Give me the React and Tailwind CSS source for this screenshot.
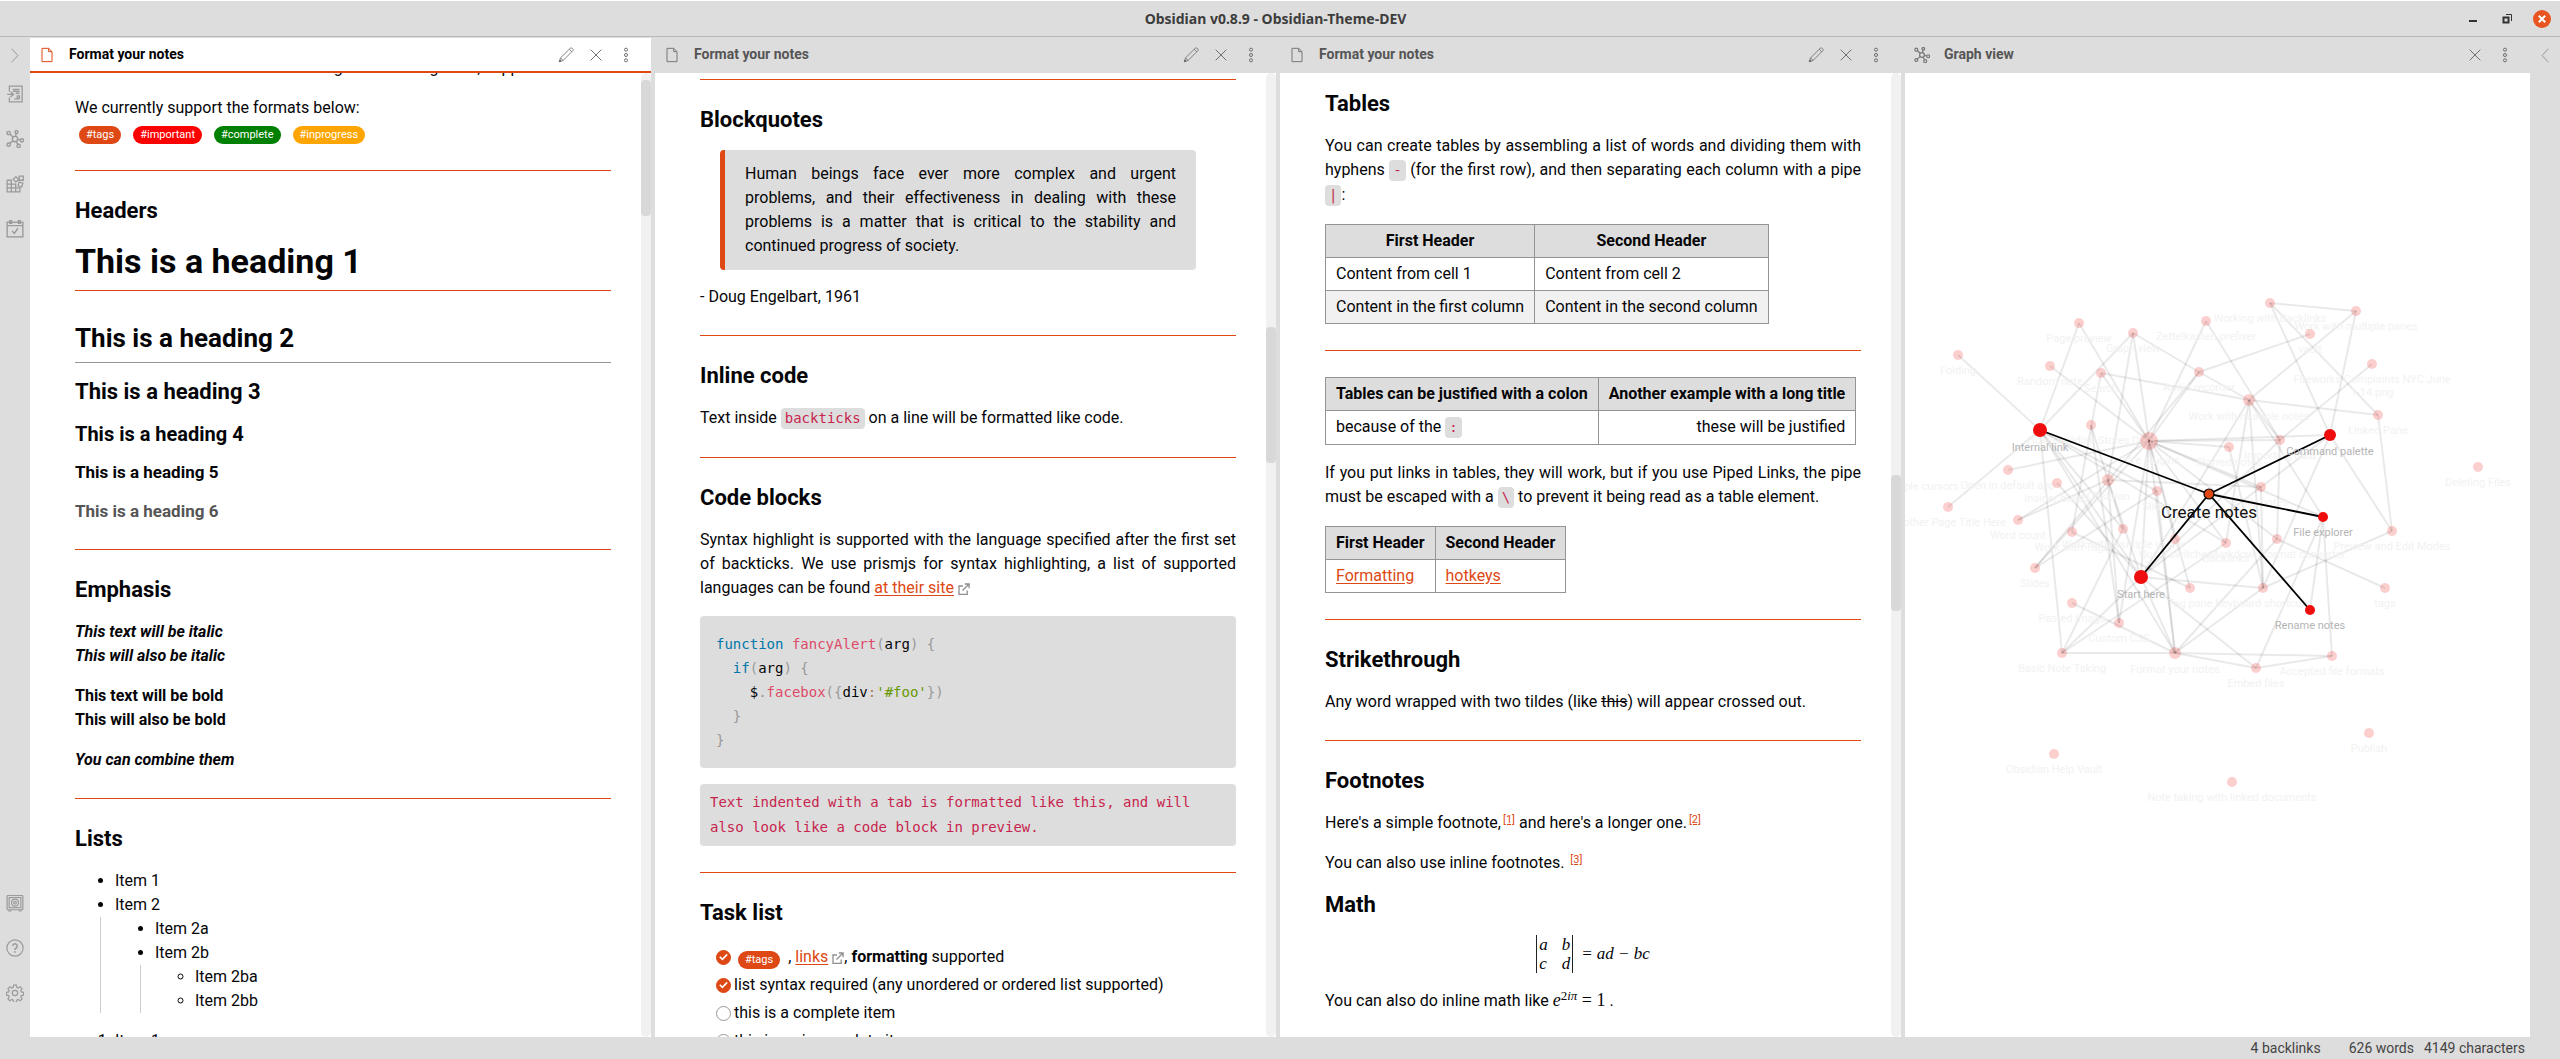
import React from "react";

/* ---------- icons ---------- */

function Icon({ size = 18, stroke = 1.5, className = "", children }) {
  return (
    <svg
      width={size}
      height={size}
      viewBox="0 0 24 24"
      fill="none"
      stroke="currentColor"
      strokeWidth={stroke}
      className={className}
      aria-hidden="true"
    >
      {children}
    </svg>
  );
}

const FileIcon = () => (
  <Icon size={16} stroke={1.5}>
    <path d="M4.500 2h10l5 5v15h-15z" />
    <path d="M14.500 2v5h5" />
  </Icon>
);

const PencilIcon = () => (
  <Icon size={16} stroke={1.2}>
    <path d="M2 22l1.800-5.600L18.600 1.600a1.600 1.600 0 0 1 2.200 0l1.600 1.600a1.600 1.600 0 0 1 0 2.200L7.600 20.200z" />
    <path d="M17 3.500L20.500 7M3.800 16.400l3.800 3.800" />
    <path d="M2 22l.8-2.600 1.800 1.800z" fill="currentColor" />
  </Icon>
);

const CloseIcon = () => (
  <Icon size={16} stroke={1.4}>
    <path d="M4 4l16 16M20 4L4 20" />
  </Icon>
);

const MoreIcon = () => (
  <Icon size={16} stroke={1.4}>
    <circle cx="12" cy="4" r="2.300" />
    <circle cx="12" cy="12" r="2.300" />
    <circle cx="12" cy="20" r="2.300" />
  </Icon>
);

const GraphIcon = ({ size = 18 }) => (
  <Icon size={size} stroke={1.8}>
    <circle cx="12" cy="12" r="3.600" />
    <circle cx="3.500" cy="4" r="2.200" />
    <circle cx="14" cy="2.800" r="2" />
    <circle cx="3.500" cy="19.500" r="2.200" />
    <circle cx="21.200" cy="13.800" r="2.200" />
    <circle cx="16.800" cy="21.200" r="2.200" />
    <path d="M5.200 5.600L9.400 9.400M13.500 4.800l-.7 3.600M5 17.800l4.400-3.400M15.600 12.600l3.400.7M13.600 15.400l2.200 3.800" />
  </Icon>
);

const SwitcherIcon = () => (
  <Icon stroke={1.7}>
    <path d="M4.500 8.500V1.500h17v21h-17v-6" />
    <path d="M9 6h9M9 8.500h9M13 11h5M15 14.500h3v3h-3z" />
    <path d="M1.500 12.500h7M6 9l4 3.500L6 16M11 18.500h7" />
  </Icon>
);

const BlocksIcon = () => (
  <Icon stroke={1.7}>
    <path d="M1.500 7v15.500h17v-5.200h-17M1.500 12.200h11.400v10.300M1.500 7h5.600v15.500" />
    <path d="M17.500 1.500h5.500v5.500h-5.500zM13.200 2.200l3.600 3.600-3.600 3.600-3.600-3.600zM17.500 9.500l5 1.500-1.500 5-5-1.500z" />
  </Icon>
);

const CalendarIcon = () => (
  <Icon stroke={1.8}>
    <rect x="1.500" y="3" width="21" height="19.500" />
    <path d="M1.500 7.500h21M5 .8h2.500v3.600H5zM16.500.8H19v3.600h-2.500zM8 14.500l3 3.500 5-7" />
  </Icon>
);

const VaultIcon = () => (
  <Icon stroke={1.6}>
    <rect x="1.500" y="2" width="21" height="19" rx="1" />
    <rect x="4.200" y="4.700" width="15.600" height="13.600" />
    <circle cx="12" cy="11.500" r="4.600" />
    <circle cx="12" cy="11.500" r="1.800" />
    <path d="M3 22.500h4M17 22.500h4" />
  </Icon>
);

const HelpIcon = () => (
  <Icon stroke={1.5}>
    <circle cx="12" cy="12" r="10.800" />
    <path d="M9 9.400a3 3 0 1 1 4.600 2.600c-1 .6-1.600 1.200-1.600 2.500" strokeWidth="2" />
    <path d="M12 16.400v1.900" strokeWidth="2.200" />
  </Icon>
);

const GearIcon = () => (
  <Icon stroke={1.6}>
    <circle cx="12" cy="12" r="3.600" />
    <path d="M10.200 1.500h3.600l.6 3 1.900.8 2.600-1.700 2.500 2.500-1.700 2.600.8 1.900 3 .6v3.600l-3 .6-.8 1.900 1.700 2.600-2.500 2.500-2.600-1.700-1.900.8-.6 3h-3.600l-.6-3-1.900-.8-2.600 1.700-2.500-2.500 1.700-2.600-.8-1.900-3-.6v-3.600l3-.6.8-1.900-1.700-2.600 2.500-2.500 2.600 1.700 1.900-.8z" />
  </Icon>
);

const ExternalIcon = () => (
  <svg
    width="12"
    height="12"
    viewBox="0 0 12 12"
    fill="none"
    stroke="#8f8f8f"
    strokeWidth="1.300"
    className="ml-1 inline-block align-[-2px]"
    aria-hidden="true"
  >
    <path d="M5 3H1v8.300h8.200V7.500M6.800 1h4.300v4.300M11 1L4.500 7.500" />
  </svg>
);

/* ---------- window chrome ---------- */

function TitleBar() {
  return (
    <header className="flex h-[37px] shrink-0 items-center border-t border-b border-t-white border-b-[#b8b8b8] pr-[9px]">
      <div className="flex-1" />
      <h1 className="font-['Noto_Sans',sans-serif] text-[14px] font-bold text-[#3d3d3d]">
        Obsidian v0.8.9 - Obsidian-Theme-DEV
      </h1>
      <div className="flex flex-1 items-center justify-end gap-[18px] text-[#333]">
        <button aria-label="Minimize" className="flex size-4 items-center justify-center">
          <span className="mt-1 h-0.5 w-2 bg-current" />
        </button>
        <button aria-label="Restore" className="flex size-4 items-center justify-center">
          <svg width="12" height="12" viewBox="0 0 12 12" fill="none" stroke="currentColor" aria-hidden="true">
            <path d="M2.500 4.500h5v5h-5z" strokeWidth="2" />
            <path d="M5 1.500h5.500V8" strokeWidth="1" />
          </svg>
        </button>
        <button aria-label="Close window" className="flex size-[18px] items-center justify-center rounded-full bg-[#e95420] text-white">
          <svg width="8" height="8" viewBox="0 0 8 8" stroke="currentColor" strokeWidth="2" aria-hidden="true">
            <path d="M.8.8l6.400 6.400M7.200.8L.8 7.200" />
          </svg>
        </button>
      </div>
    </header>
  );
}

function RibbonButton({ label, children }) {
  return (
    <button aria-label={label} className="flex h-[45px] w-full items-center justify-center">
      {children}
    </button>
  );
}

function LeftRibbon() {
  return (
    <nav className="flex w-[30px] shrink-0 flex-col pb-[22px] text-[#9a9a9a]">
      <button aria-label="Expand sidebar" className="flex h-[34px] items-center justify-center">
        <svg width="8" height="15" viewBox="0 0 8 15" fill="none" stroke="currentColor" className="mt-0.5" aria-hidden="true">
          <path d="M.8.8l6 6.700-6 6.700" />
        </svg>
      </button>
      <RibbonButton label="Open quick switcher"><SwitcherIcon /></RibbonButton>
      <RibbonButton label="Open graph view"><GraphIcon /></RibbonButton>
      <RibbonButton label="Open Markdown importer"><BlocksIcon /></RibbonButton>
      <RibbonButton label="Open today's note"><CalendarIcon /></RibbonButton>
      <div className="flex-1" />
      <RibbonButton label="Open another vault"><VaultIcon /></RibbonButton>
      <RibbonButton label="Help"><HelpIcon /></RibbonButton>
      <RibbonButton label="Settings"><GearIcon /></RibbonButton>
    </nav>
  );
}

function RightRibbon() {
  return (
    <nav className="w-[30px] shrink-0 text-[#9a9a9a]">
      <button aria-label="Expand right sidebar" className="flex h-9 w-full items-center justify-center">
        <svg width="8" height="15" viewBox="0 0 8 15" fill="none" stroke="currentColor" aria-hidden="true">
          <path d="M7.200.8l-6 6.700 6 6.700" />
        </svg>
      </button>
    </nav>
  );
}

function PaneHeader({ title, icon, active, editable = true }) {
  return (
    <div
      className={
        active
          ? "mt-px flex h-[35px] shrink-0 items-center border-b-2 border-[#dd4814] bg-white pr-[17px] pl-[9px] text-black"
          : "flex h-9 shrink-0 items-center pr-[17px] pl-[9px] text-[#555]"
      }
    >
      <span className={active ? "text-[#dd4814]" : "text-[#777]"}>{icon}</span>
      <h2 className="ml-3.5 flex-1 pb-0.5 text-[14px] leading-5 font-bold">{title}</h2>
      <div className="flex gap-3.5 text-[#666]">
        {editable && <button aria-label="Edit"><PencilIcon /></button>}
        <button aria-label="Close pane"><CloseIcon /></button>
        <button aria-label="More options"><MoreIcon /></button>
      </div>
    </div>
  );
}

function Scrollbar({ thumb }) {
  return (
    <div className="w-2.5 shrink-0 rounded-full bg-[#f1f1f1]">
      <div className={thumb} />
    </div>
  );
}

function NotePane({ active, thumb, contentClass, children }) {
  return (
    <section className="flex min-h-0 min-w-0 flex-col border-r-4 border-[#ddd]">
      <PaneHeader title="Format your notes" icon={<FileIcon />} active={active} />
      <div className="flex min-h-0 flex-1 bg-white">
        <article className="min-w-0 flex-1 overflow-hidden pr-[30px] pl-[45px] text-[16px] leading-6 text-[#050508]">
          <div className={contentClass}>{children}</div>
        </article>
        <Scrollbar thumb={thumb} />
      </div>
    </section>
  );
}

/* ---------- note elements ---------- */

const Rule = () => <hr className="my-[26px] h-px border-0 bg-[#dd4814]" />;
const H3 = ({ children }) => <h3 className="mt-[15px] mb-4 text-[22px] leading-7 font-bold">{children}</h3>;
const P = ({ children }) => <p className="mb-4 text-justify">{children}</p>;
const Code = ({ children }) => (
  <code className="rounded bg-[#ddd] px-1 pt-0.5 pb-[3px] font-['DejaVu_Sans_Mono',monospace] text-[14px] leading-[25px] text-[#c7254e]">
    {children}
  </code>
);
const Link = ({ children }) => (
  <a href="#" className="text-[#dd4814] underline underline-offset-2">{children}</a>
);

function Tag({ className = "bg-[#dd4814]", children }) {
  return (
    <a href="#" className={"mx-1 inline-block rounded-full px-[7px] align-[-1px] text-[11px] leading-[18px] text-white " + className}>
      {children}
    </a>
  );
}

const Th = ({ children }) => (
  <th className="border border-[#949494] bg-[#ddd] px-2.5 py-1 text-center font-bold">{children}</th>
);
const Td = ({ className = "", children }) => (
  <td className={"border border-[#949494] px-2.5 py-1 " + className}>{children}</td>
);

const FootRef = ({ children }) => (
  <sup className="ml-0.5 text-[11px]"><a href="#" className="text-[#dd4814] underline">{children}</a></sup>
);

function Task({ id, done, children }) {
  return (
    <li className="flex h-7 items-center">
      <span className="grid size-[15px] shrink-0 place-items-center">
        <input
          id={id}
          type="checkbox"
          defaultChecked={done}
          className="col-start-1 row-start-1 size-[15px] appearance-none rounded-full border border-[#999] checked:border-[#dd4814] checked:bg-[#dd4814]"
        />
        {done && (
          <svg width="9" height="8" viewBox="0 0 9 8" fill="none" stroke="white" strokeWidth="1.600" className="pointer-events-none col-start-1 row-start-1" aria-hidden="true">
            <path d="M.8 3.800l2.600 2.600L8.200 1.400" />
          </svg>
        )}
      </span>
      <label htmlFor={id} className="ml-[3px]">{children}</label>
    </li>
  );
}

/* ---------- note sections ---------- */

function FirstNote() {
  return (
    <>
      <P>Each note in this vault is written using the following rules, supported.</P>
      <p>
        We currently support the formats below:
        <br />
        <Tag>#tags</Tag> <Tag className="bg-[#ff0000]">#important</Tag>{" "}
        <Tag className="bg-[#008000]">#complete</Tag> <Tag className="bg-[#ffa500]">#inprogress</Tag>
      </p>
      <Rule />
      <H3>Headers</H3>
      <h1 className="mt-4 mb-[31px] border-b border-[#dd4814] pb-[9px] text-[34px] leading-10 font-bold">This is a heading 1</h1>
      <h2 className="mb-[15px] border-b border-[#949494] pb-2 text-[26px] leading-8 font-bold">This is a heading 2</h2>
      <H3>This is a heading 3</H3>
      <h4 className="my-3.5 text-[20px] leading-6 font-bold">This is a heading 4</h4>
      <h5 className="mt-3.5 mb-[15px] text-[17px] leading-6 font-bold">This is a heading 5</h5>
      <h6 className="my-[15px] text-[17px] leading-6 font-bold text-[#555]">This is a heading 6</h6>
      <Rule />
      <H3>Emphasis</H3>
      <P>
        <em className="font-bold">This text will be italic</em>
        <br />
        <em className="font-bold">This will also be italic</em>
      </P>
      <P>
        <strong>This text will be bold</strong>
        <br />
        <strong>This will also be bold</strong>
      </P>
      <P>
        <strong><em>You can combine them</em></strong>
      </P>
      <Rule />
      <H3>Lists</H3>
      <ul className="mb-4 list-disc pl-10">
        <li>Item 1</li>
        <li>
          Item 2
          <ul className="-ml-[15px] list-disc border-l border-[#ccc] pl-[54px]">
            <li>Item 2a</li>
            <li>
              Item 2b
              <ul className="-ml-[15px] list-[circle] border-l border-[#ccc] pl-[54px]">
                <li>Item 2ba</li>
                <li>Item 2bb</li>
              </ul>
            </li>
          </ul>
        </li>
      </ul>
      <ol className="list-decimal pl-10">
        <li>Item 1</li>
      </ol>
    </>
  );
}

const Punct = ({ children }) => <span className="text-[#999]">{children}</span>;
const Fn = ({ children }) => <span className="text-[#dd4a68]">{children}</span>;
const Kw = ({ children }) => <span className="text-[#0077aa]">{children}</span>;

function SecondNote() {
  return (
    <>
      <Rule />
      <H3>Blockquotes</H3>
      <blockquote className="mr-10 mb-[15px] ml-5 rounded border-l-[5px] border-[#dd4814] bg-[#ddd] px-5 py-3 text-justify">
        Human beings face ever more complex and urgent problems, and their effectiveness in dealing with these
        problems is a matter that is critical to the stability and continued progress of society.
      </blockquote>
      <P>- Doug Engelbart, 1961</P>
      <Rule />
      <H3>Inline code</H3>
      <P>
        Text inside <Code>backticks</Code> on a line will be formatted like code.
      </P>
      <Rule />
      <H3>Code blocks</H3>
      <P>
        Syntax highlight is supported with the language specified after the first set of backticks. We use prismjs for
        syntax highlighting, a list of supported languages can be found <Link>at their site</Link>
        <ExternalIcon />
      </P>
      <pre className="mb-4 rounded bg-[#ddd] p-4 font-['DejaVu_Sans_Mono',monospace] text-[14px] leading-6">
        <code className="font-['DejaVu_Sans_Mono',monospace]">
          <Kw>function</Kw> <Fn>fancyAlert</Fn><Punct>(</Punct>arg<Punct>)</Punct> <Punct>{"{"}</Punct>{"\n  "}
          <Kw>if</Kw><Punct>(</Punct>arg<Punct>)</Punct> <Punct>{"{"}</Punct>{"\n    "}
          $<Punct>.</Punct><Fn>facebox</Fn><Punct>{"({"}</Punct>div<span className="text-[#a67f59]">:</span>
          <span className="text-[#669900]">'#foo'</span><Punct>{"})"}</Punct>{"\n  "}
          <Punct>{"}"}</Punct>{"\n"}
          <Punct>{"}"}</Punct>
        </code>
      </pre>
      <pre className="rounded bg-[#ddd] px-2.5 py-1.5 font-['DejaVu_Sans_Mono',monospace] text-[14px] leading-[25px] whitespace-pre-wrap text-[#c7254e]">
        <code className="font-['DejaVu_Sans_Mono',monospace]">
          Text indented with a tab is formatted like this, and will also look like a code block in preview.
        </code>
      </pre>
      <Rule />
      <H3>Task list</H3>
      <ul className="pl-4">
        <Task id="task-formats" done>
          <Tag>#tags</Tag> , <Link>links</Link>
          <ExternalIcon />, <strong>formatting</strong> supported
        </Task>
        <Task id="task-syntax" done>list syntax required (any unordered or ordered list supported)</Task>
        <Task id="task-complete">this is a complete item</Task>
        <Task id="task-incomplete">this is an incomplete item</Task>
      </ul>
    </>
  );
}

const mathFont = "font-['Liberation_Serif',serif]";

function ThirdNote() {
  return (
    <>
      <H3>Tables</H3>
      <P>
        You can create tables by assembling a list of words and dividing them with hyphens <Code>-</Code> (for the
        first row), and then separating each column with a pipe <Code>|</Code>:
      </P>
      <table className="mb-4 border-collapse">
        <thead>
          <tr><Th>First Header</Th><Th>Second Header</Th></tr>
        </thead>
        <tbody>
          <tr><Td>Content from cell 1</Td><Td>Content from cell 2</Td></tr>
          <tr className="bg-[#f1f1f1]"><Td>Content in the first column</Td><Td>Content in the second column</Td></tr>
        </tbody>
      </table>
      <Rule />
      <table className="mb-4 border-collapse">
        <thead>
          <tr><Th>Tables can be justified with a colon</Th><Th>Another example with a long title</Th></tr>
        </thead>
        <tbody>
          <tr><Td>because of the <Code>:</Code></Td><Td className="text-right align-top">these will be justified</Td></tr>
        </tbody>
      </table>
      <P>
        If you put links in tables, they will work, but if you use Piped Links, the pipe must be escaped with a{" "}
        <Code>\</Code> to prevent it being read as a table element.
      </P>
      <table className="mb-4 border-collapse">
        <thead>
          <tr><Th>First Header</Th><Th>Second Header</Th></tr>
        </thead>
        <tbody>
          <tr><Td><Link>Formatting</Link></Td><Td><Link>hotkeys</Link></Td></tr>
        </tbody>
      </table>
      <Rule />
      <H3>Strikethrough</H3>
      <P>Any word wrapped with two tildes (like <del>this</del>) will appear crossed out.</P>
      <Rule />
      <H3>Footnotes</H3>
      <P>
        Here's a simple footnote,<FootRef>[1]</FootRef> and here's a longer one.<FootRef>[2]</FootRef>
      </P>
      <P>
        You can also use inline footnotes. <FootRef>[3]</FootRef>
      </P>
      <H3>Math</H3>
      <div className={"mb-4 flex items-center justify-center gap-2 text-[17px] leading-6 italic " + mathFont}>
        <div className="grid grid-cols-2 gap-x-3.5 border-x border-[#222] px-0.5 leading-[19px]">
          <span>a</span><span>b</span><span>c</span><span>d</span>
        </div>
        <span>= ad − bc</span>
      </div>
      <P>
        You can also do inline math like{" "}
        <span className={"text-[18px] leading-5 " + mathFont}>
          <i>e</i><sup className="text-[13px]">2<i>iπ</i></sup> = 1
        </span>{" "}
        .
      </P>
    </>
  );
}

/* ---------- graph ---------- */

const nodes = {
  preview: [174, 250, 5, "Page preview"],
  graph: [228, 260, 5, "Graph view"],
  folding: [53, 282, 5, "Folding"],
  random: [145, 293, 5, "Random note"],
  search: [196, 300, 5, "Search"],
  zettel: [301, 248, 5, "Zettelkasten prefixer"],
  audio: [294, 299, 5, "Audio recorder"],
  stores: [186, 352, 5, "How Obsidian Stores Data"],
  core: [244, 368, 9, "Core plugins"],
  starred: [324, 374, 5, "Starred notes"],
  openDefault: [103, 397, 5, "Open in default app"],
  insider: [152, 410, 5, "Insider builds"],
  obsidian: [203, 407, 6, "Obsidian"],
  slidesNote: [252, 418, 5, "Slides"],
  another: [43, 434, 5, "Another Page Title Here"],
  word: [113, 447, 5, "Word count"],
  workTags: [167, 459, 5, "Work with Tags"],
  vaults: [218, 456, 5, "Work with multiple vaults"],
  quick: [270, 466, 5, "Quick switcher"],
  backlinks: [321, 470, 5, "Backlinks"],
  slides: [130, 495, 5, "Slides"],
  tagPane: [285, 515, 5, "Tag pane"],
  pasted: [167, 530, 5, "Pasted image"],
  css: [214, 550, 5, "Custom CSS"],
  basic: [157, 580, 5, "Basic Note Taking"],
  format: [270, 580, 6, "Format your notes"],
  working: [365, 230, 5, "Working with Backlinks"],
  panes: [451, 238, 5, "Work with multiple panes"],
  vault: [405, 261, 5, "vault"],
  fireworks: [467, 291, 5, "Fireworks Complaints NYC June"],
  workNotes: [344, 327, 6, "Work with multiple notes"],
  linked: [473, 342, 5, "Linked Pane"],
  importing: [375, 367, 5, "Importing data"],
  deleting: [573, 394, 5, "Deleting Files"],
  daily: [356, 414, 5, "Daily notes"],
  modes: [487, 458, 5, "Preview and Edit Modes"],
  converter: [372, 466, 5, "Markdown format converter"],
  keyboard: [358, 515, 5, "Keyboard shortcuts"],
  tags: [480, 515, 5, "tags"],
  accepted: [427, 583, 5, "Accepted file formats"],
  embed: [351, 595, 5, "Embed files"],
  vim: [149, 681, 5, "Obsidian Help Vault"],
  plugins: [464, 660, 5, "Publish"],
  contact: [327, 709, 5, "Note taking with linked documents"],
};

const activeNodes = {
  internal: [135, 357, 7, "Internal link"],
  start: [236, 504, 7, "Start here"],
  command: [425, 362, 6, "Command palette"],
  explorer: [418, 444, 5, "File explorer"],
  rename: [405, 537, 5, "Rename notes"],
};

const center = [304, 421];

const edges = [
  "folding internal", "preview internal", "preview core", "graph internal", "graph core", "graph audio",
  "graph obsidian", "random core", "search core", "search workNotes", "search workTags", "zettel core",
  "zettel importing", "audio core", "audio slides", "audio vault", "audio workNotes", "internal another",
  "internal basic", "internal vaults", "internal start", "internal format", "internal slidesNote",
  "internal backlinks", "stores css", "stores vaults", "openDefault core", "core starred", "core command",
  "core importing", "core daily", "core explorer", "core backlinks", "core quick", "core word", "core slides",
  "core css", "core tagPane", "core format", "core start", "core converter", "obsidian word", "obsidian css",
  "obsidian start", "insider start", "slides slidesNote", "workTags tagPane", "vaults basic", "start keyboard",
  "start basic", "start format", "start embed", "basic format", "basic backlinks", "format accepted",
  "format embed", "format keyboard", "format converter", "format pasted", "slidesNote format",
  "workNotes panes", "workNotes linked", "workNotes importing", "workNotes keyboard", "workNotes start",
  "workNotes explorer", "workNotes backlinks", "starred keyboard", "working panes", "working linked",
  "working command", "panes command", "command modes", "command daily", "command keyboard",
  "fireworks importing", "importing converter", "importing start", "linked modes", "explorer rename",
  "explorer embed", "explorer accepted", "modes keyboard", "converter tags", "daily start", "daily keyboard",
  "daily obsidian", "accepted embed",
];

function GraphView() {
  const all = { ...nodes, ...activeNodes };
  return (
    <svg viewBox="0 0 625 964" className="size-full font-['Roboto',sans-serif]" role="img" aria-label="Graph of linked notes">
      <g stroke="#000" strokeOpacity="0.085" strokeWidth="2">
        {edges.map((e) => {
          const [a, b] = e.split(" ");
          return <line key={e} x1={all[a][0]} y1={all[a][1]} x2={all[b][0]} y2={all[b][1]} />;
        })}
      </g>
      <g textAnchor="middle" fontSize="11">
        {Object.entries(nodes).map(([id, [x, y, r, label]]) => (
          <g key={id}>
            <circle cx={x} cy={y} r={r} fill="#f00d0d" fillOpacity="0.200" />
            <text x={x} y={y + r + 14} fill="#f2f2f2">{label}</text>
          </g>
        ))}
        <text x="467" y="323" fill="#f2f2f2">1-14.png</text>
        <text x="14" y="417" fill="#f2f2f2">Multiple cursors</text>
      </g>
      <g stroke="#000" strokeWidth="1.800">
        {Object.entries(activeNodes).map(([id, [x, y]]) => (
          <line key={id} x1={center[0]} y1={center[1]} x2={x} y2={y} />
        ))}
      </g>
      <g textAnchor="middle" fontSize="11">
        {Object.entries(activeNodes).map(([id, [x, y, r, label]]) => (
          <g key={id}>
            <circle cx={x} cy={y} r={r} fill="#f00d0d" />
            <text x={x} y={y + r + 14} fill="#b4b4b4">{label}</text>
          </g>
        ))}
        <circle cx={center[0]} cy={center[1]} r="5" fill="#dd4814" stroke="#000" strokeWidth="1.200" />
        <text x={center[0]} y="445" fill="#111" fontSize="17">Create notes</text>
      </g>
    </svg>
  );
}

/* ---------- app ---------- */

export default function App() {
  return (
    <div className="flex h-screen flex-col overflow-hidden bg-[#ddd] font-['Roboto',sans-serif]">
      <TitleBar />
      <div className="flex min-h-0 flex-1">
        <LeftRibbon />
        <main className="grid min-h-0 min-w-0 flex-1 grid-cols-4 grid-rows-[minmax(0,1fr)]">
          <NotePane active contentClass="-mt-[17px]" thumb="mt-[7px] h-[136px] rounded bg-[#d8d8d8]">
            <FirstNote />
          </NotePane>
          <NotePane contentClass="-mt-5" thumb="mt-[254px] h-[136px] rounded bg-[#d8d8d8]">
            <SecondNote />
          </NotePane>
          <NotePane contentClass="pt-0.5" thumb="mt-[402px] h-[136px] rounded bg-[#d8d8d8]">
            <ThirdNote />
          </NotePane>
          <section className="flex min-h-0 min-w-0 flex-col">
            <PaneHeader title="Graph view" icon={<GraphIcon size={16} />} editable={false} />
            <div className="min-h-0 flex-1 overflow-hidden bg-white">
              <GraphView />
            </div>
          </section>
        </main>
        <RightRibbon />
      </div>
      <footer className="flex h-[22px] shrink-0 items-center justify-end pr-[35px] text-[14px] leading-5 text-[#444]">
        <span>4 backlinks</span>
        <span className="ml-7">626 words</span>
        <span className="ml-2.5">4149 characters</span>
      </footer>
    </div>
  );
}
